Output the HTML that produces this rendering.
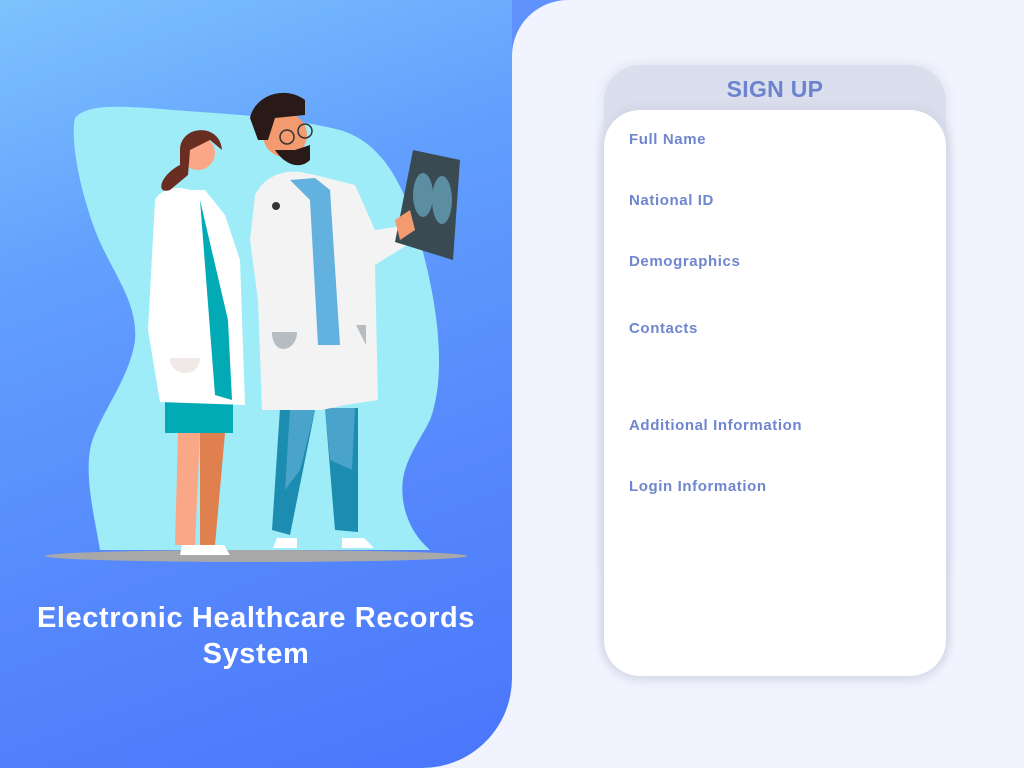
<!DOCTYPE html>
<html><head><meta charset="utf-8"><style>
html,body{margin:0;padding:0;width:1024px;height:768px;overflow:hidden;background:#f1f4fe;font-family:"Liberation Sans",sans-serif;}
.corner{position:absolute;left:500px;top:0;width:80px;height:80px;background:#5f92fc;}
.light{position:absolute;left:512px;top:0;width:512px;height:768px;background:#f1f4fe;border-top-left-radius:56px;}
.blue{position:absolute;left:0;top:0;width:512px;height:768px;border-bottom-right-radius:90px;background:linear-gradient(160deg,#7dc3fd 0%,#62a0fd 30%,#5688fc 65%,#4a76fb 100%);overflow:hidden;}
.title{position:absolute;left:0;width:512px;top:600px;text-align:center;color:#fff;font-weight:bold;font-size:29px;line-height:36px;letter-spacing:0.6px;}
.hdr{position:absolute;left:604px;top:65px;width:342px;height:532px;background:#dadfed;border-radius:36px;box-shadow:0 0 8px 4px #e5e8f4;}
.hdr div{text-align:center;color:#6c83cf;font-weight:bold;font-size:23px;margin-top:11px;letter-spacing:0.3px;}
.card{position:absolute;left:604px;top:110px;width:342px;height:566px;background:#fff;border-radius:36px;box-shadow:0 -2px 8px 3px #d2d6e6,0 4px 8px 3px #e4e7f3;}
.lbl{position:absolute;left:629px;color:#6f86cf;font-weight:bold;font-size:15px;letter-spacing:0.6px;}
</style></head><body>
<div class="corner"></div>
<div class="light"></div>
<div class="blue">
<svg width="512" height="768" viewBox="0 0 512 768" style="position:absolute;left:0;top:0">
<path d="M75,118 C90,100 140,108 200,112 C260,116 300,120 340,130 C390,145 410,200 425,260 C440,320 445,380 430,420 C415,450 395,470 405,510 C412,535 425,545 430,550 L100,550 C95,520 85,480 90,450 C95,420 130,380 135,340 C138,300 110,270 95,230 C80,190 70,140 75,118 Z" fill="#9eecf8"/>
<ellipse cx="256" cy="556" rx="211" ry="6" fill="#a8a8a8"/>
<path d="M178,433 L175,545 L195,545 L200,433 Z" fill="#f9a787"/>
<path d="M200,433 L200,545 L215,545 L225,433 Z" fill="#e0804f"/>
<path d="M182,545 h22 v10 h-24 Z M204,545 h20 l6,10 h-26 Z" fill="#fff"/>
<path d="M165,395 h68 v38 h-68 Z" fill="#02aab5"/>
<path d="M155,200 C160,190 175,185 190,190 L205,190 L225,215 L240,260 L245,405 L160,402 L148,330 Z" fill="#fff"/>
<path d="M200,200 L228,320 L232,400 L215,395 Z" fill="#02aab5"/>
<path d="M170,358 h30 c0,20 -30,20 -30,0 Z" fill="#f1e8e8"/>
<circle cx="198" cy="153" r="17" fill="#f9a787"/>
<path d="M180,150 C180,125 220,122 222,150 L210,140 L190,150 L188,175 L170,190 C155,195 160,175 180,165 Z" fill="#6a2d22"/>
<path d="M280,408 L272,530 L290,535 L315,410 Z M325,408 L335,530 L358,532 L358,408 Z" fill="#1c8db0"/>
<path d="M290,408 L285,490 L300,470 L315,410 Z M325,408 L330,460 L352,470 L355,408 Z" fill="#4aa3cb"/>
<path d="M277,538 h20 v10 h-24 Z M342,538 h22 l10,10 h-32 Z" fill="#fff"/>
<path d="M255,195 C265,175 285,170 300,172 L315,175 L355,185 L375,230 L410,225 L415,240 L375,265 L378,400 L345,405 L322,410 L262,410 L258,300 L250,240 Z" fill="#f3f3f3"/>
<path d="M290,180 L310,200 L318,345 L340,345 L330,190 L315,178 Z" fill="#62b1df"/>
<path d="M272,332 h25 c0,20 -25,25 -25,0 Z" fill="#b7bcc0"/>
<path d="M356,325 h10 l0,20 Z" fill="#b7bcc0"/>
<path d="M413,150 L460,160 L453,260 L395,242 Z" fill="#3a4a52"/>
<ellipse cx="423" cy="195" rx="10" ry="22" fill="#5a8ea0"/><ellipse cx="442" cy="200" rx="10" ry="24" fill="#5a8ea0"/>
<path d="M395,220 l15,-10 l5,20 l-15,10 Z" fill="#f39a6f"/>
<circle cx="285" cy="135" r="22" fill="#f39a6f"/>
<path d="M275,150 C285,165 300,170 310,160 L310,145 L295,150 Z" fill="#2a1a17"/>
<path d="M250,118 C255,95 285,85 305,100 L305,115 L275,118 L268,140 L258,140 Z" fill="#2a1a17"/>
<circle cx="287" cy="137" r="7" fill="none" stroke="#333" stroke-width="1.5"/><circle cx="305" cy="131" r="7" fill="none" stroke="#333" stroke-width="1.5"/>
<circle cx="276" cy="206" r="4" fill="#333"/>
</svg>
<div class="title">Electronic Healthcare Records<br>System</div>
</div>
<div class="hdr"><div>SIGN UP</div></div>
<div class="card"></div>
<div class="lbl" style="top:131px">Full Name</div>
<div class="lbl" style="top:192px">National ID</div>
<div class="lbl" style="top:253px">Demographics</div>
<div class="lbl" style="top:320px">Contacts</div>
<div class="lbl" style="top:417px">Additional Information</div>
<div class="lbl" style="top:478px">Login Information</div>
</body></html>
